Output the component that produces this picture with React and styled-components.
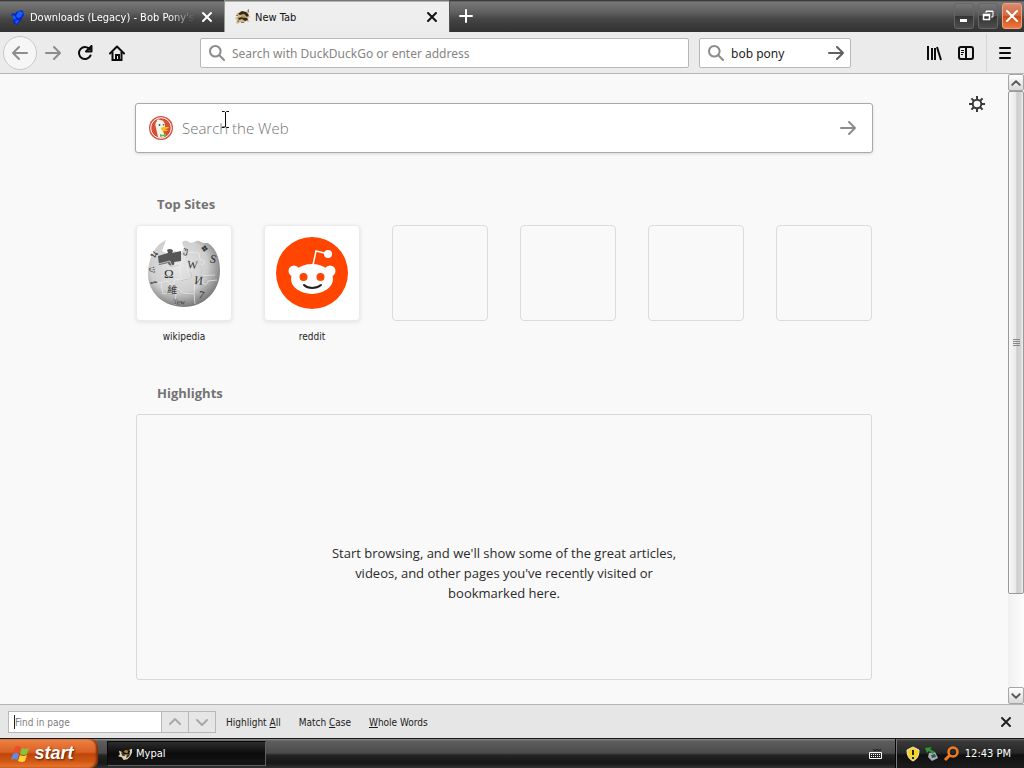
import { useState } from 'react'
import styled, { createGlobalStyle } from 'styled-components'

const tahoma = `'DejaVu Sans Condensed', Tahoma, 'Noto Sans', sans-serif`
const noto = `'Noto Sans', sans-serif`
const segoe = `'Segoe UI', 'Open Sans', 'Noto Sans', sans-serif`

const GlobalStyle = createGlobalStyle`
  * {
    box-sizing: border-box;
  }

  body {
    margin: 0;
    font-family: ${tahoma};
    font-size: 11px;
    color: #222;
  }

  button {
    display: flex;
    align-items: center;
    justify-content: center;
    margin: 0;
    padding: 0;
    border: 0;
    background: none;
    color: inherit;
    font: inherit;
    flex: none;
  }

  svg {
    display: block;
    flex: none;
  }
`

const Desktop = styled.div`
  height: 100vh;
  display: flex;
  flex-direction: column;
  background-color: #f9f9f9;
`

const TitleBar = styled.header`
  height: 32px;
  display: flex;
  flex: none;
  background: linear-gradient(#262626 0, #777 2px, #606060 12px, #434343 20px, #323232 100%);
`

const Tab = styled.div`
  width: 225px;
  display: flex;
  align-items: center;
  gap: 4px;
  padding: 2px 9px 0 10px;
  color: ${p => (p.$active ? '#111' : '#fff')};
  background: ${p => (p.$active ? 'linear-gradient(#777 0, #777 1px, #efefef 2px, #ececec)' : 'none')};
  border-right: 1px solid ${p => (p.$active ? '#555' : '#999')};
`

const TabTitle = styled.span`
  flex: 1;
  min-width: 0;
  overflow: hidden;
  white-space: nowrap;
  mask-image: ${p => (p.$fade ? 'linear-gradient(to right, #000 84%, transparent)' : 'none')};
`

const NewTabButton = styled.button`
  width: 32px;
  color: #fff;
`

const WindowButtons = styled.div`
  display: flex;
  gap: 4px;
  margin-left: auto;
  padding: 3px 2px 3px 0;
`

const WindowButton = styled.button`
  width: 20px;
  height: 26px;
  border: 1px solid ${p => (p.$close ? '#f3a080' : '#666')};
  border-radius: 3px;
  color: #fff;
  background: ${p =>
    p.$close
      ? 'linear-gradient(#d98a6c, #d2673d 50%, #cc4c19 52%, #ec7a43)'
      : 'linear-gradient(#777, #555 48%, #353535 52%, #4c4c4c)'};
`

const Toolbar = styled.nav`
  height: 42px;
  display: flex;
  flex: none;
  align-items: center;
  padding: 0 1px 0 3px;
  background-color: #ebebeb;
  border-bottom: 1px solid #b5b5b5;
`

const ToolButton = styled.button`
  width: 32px;
  height: 32px;
  color: ${p => (p.$dim ? '#8d8d8d' : '#0c0c0c')};
`

const BackButton = styled(ToolButton)`
  width: 34px;
  height: 34px;
  border: 1px solid #c8c8c8;
  border-radius: 50%;
  background-color: #f6f6f6;
`

const AddressField = styled.label`
  height: 30px;
  min-width: 0;
  display: flex;
  align-items: center;
  flex: ${p => (p.$grow ? '1' : '0 0 152px')};
  gap: 7px;
  padding: 0 6px 0 8px;
  margin-left: ${p => (p.$grow ? '67px' : '10px')};
  color: #8c8c8c;
  background-color: #fff;
  border: 1px solid #b8b8b8;
  border-radius: 2px;
`

const AddressInput = styled.input`
  flex: 1;
  min-width: 0;
  height: 20px;
  padding: 1px 0 0;
  border: 0;
  outline: 0;
  background: none;
  color: #222;
  font: 12px ${noto};

  &::placeholder {
    color: #858585;
    opacity: 1;
  }
`

const GoButton = styled.button`
  color: #5f5f5f;
`

const ToolbarEnd = styled.div`
  height: 100%;
  display: flex;
  align-items: center;
  margin-left: 67px;
`

const MenuButton = styled(ToolButton)`
  height: 38px;
  width: 37px;
  margin-left: 4px;
  border-left: 1px solid #d6d6d6;
`

const Viewport = styled.div`
  flex: 1;
  min-height: 0;
  display: flex;
`

const Page = styled.main`
  position: relative;
  flex: 1;
  min-width: 0;
  overflow: hidden;
  padding: 29px 24px 24px;
  font-family: ${segoe};
`

const SettingsButton = styled.button`
  position: absolute;
  top: 22px;
  right: 23px;
  color: #3a3a3a;
`

const Column = styled.div`
  max-width: 736px;
  margin: 0 auto;
`

const SearchBox = styled.form`
  position: relative;
  height: 50px;
  display: flex;
  align-items: center;
  gap: 9px;
  margin: 0 -1px;
  padding: 0 8px 0 13px;
  background-color: #fff;
  border: 1px solid #aaa;
  border-radius: 3px;
  box-shadow: 0 1px 3px #00000022;
`

const SearchInput = styled.input`
  flex: 1;
  min-width: 0;
  padding: 0;
  border: 0;
  outline: 0;
  background: none;
  font: 300 15px ${segoe};

  &::placeholder {
    color: #737373;
    opacity: 1;
  }
`

const Pointer = styled.svg`
  position: absolute;
  top: 7px;
  left: 86px;
`

const SectionTitle = styled.h3`
  margin: ${p => p.$top}px 0 0 21px;
  font: bold 13px / 20px ${segoe};
  color: #737373;
`

const Tiles = styled.ul`
  display: grid;
  grid-template-columns: repeat(6, 96px);
  justify-content: space-between;
  margin: 11px 0 0;
  padding: 0;
  list-style: none;
`

const Tile = styled.a`
  display: block;
  color: #222;
  font: 10px / 16px ${tahoma};
  text-align: center;
  text-decoration: none;
`

const TileCard = styled.span`
  height: 96px;
  display: flex;
  align-items: center;
  justify-content: center;
  margin-bottom: 8px;
  border-radius: 4px;
  background-color: ${p => (p.$empty ? 'transparent' : '#fff')};
  border: 1px solid ${p => (p.$empty ? '#dcdcdc' : '#ececec')};
  box-shadow: ${p => (p.$empty ? 'none' : '0 1px 4px #0000001c')};
`

const EmptyHighlights = styled.div`
  margin-top: 11px;
  padding: 128px 24px 76px;
  border: 1px solid #d9d9d9;
  border-radius: 3px;
`

const EmptyText = styled.p`
  max-width: 346px;
  margin: 0 auto;
  font: 13px / 20px ${segoe};
  color: #2a2a2a;
  text-align: center;
`

const ScrollBar = styled.div`
  width: 16px;
  display: flex;
  flex-direction: column;
  flex: none;
  background: linear-gradient(to right, #f0f0f0, #fdfdfd);
`

const ScrollArrow = styled.button`
  height: 17px;
  border: 1px solid #a5a5a5;
  border-radius: 2px;
  background: linear-gradient(#fff, #d8d8d8);
  color: #555;
`

const ScrollTrack = styled.div`
  flex: 1;
`

const ScrollThumb = styled.div`
  height: 84.4%;
  display: flex;
  align-items: center;
  justify-content: center;
  border: 1px solid #999;
  border-radius: 2px;
  background: linear-gradient(to right, #f8f8f8 0, #e8e8e8 50%, #cdcdcd 55%, #d6d6d6 85%, #f3f3f3);
  color: #888;
`

const FindBar = styled.section`
  height: 34px;
  display: flex;
  flex: none;
  align-items: center;
  padding: 1px 7px 0 8px;
  background-color: #e6e6e6;
  border-top: 1px solid #b5b5b5;
  font-size: 10px;
`

const FindInput = styled.input`
  width: 154px;
  height: 22px;
  padding: 0 6px;
  border: 1px solid #b8b8b8;
  border-radius: 0;
  outline: 0;
  background: linear-gradient(#222, #222) 5px center / 1px 14px no-repeat #fff;
  caret-color: transparent;
  font: 10px ${tahoma};

  &:not(:placeholder-shown) {
    background: #fff;
    caret-color: auto;
  }

  &::placeholder {
    color: #808080;
    opacity: 1;
  }
`

const FindStep = styled.button`
  width: 27px;
  height: 22px;
  border: solid #b8b8b8;
  border-width: 1px 1px 1px 0;
  color: #a8a8a8;
`

const FindOptions = styled.div`
  display: flex;
  gap: 18px;
  margin-left: 10px;
  color: #1c1c1c;
`

const FindClose = styled.button`
  margin-left: auto;
  padding: 3px;
`

const Taskbar = styled.footer`
  height: 30px;
  display: flex;
  flex: none;
  border-top: 1px solid #181818;
  background: linear-gradient(#909090 0, #5e5e5e 2px, #4b4b4b 14px, #252525 16px, #161616 24px, #333);
  color: #fff;
`

const StartButton = styled.button`
  width: 98px;
  gap: 4px;
  padding-right: 13px;
  border-radius: 0 8px 8px 0;
  background: linear-gradient(#e8925d 0, #ec7b3b 3px, #d96226 13px, #bf4609 15px, #cf5714 22px, #ec7a31);
  box-shadow: inset -2px 0 2px #7e2f0a;
  color: #fff;
  font: italic bold 18px 'Liberation Sans', sans-serif;
  text-shadow: 1px 1px 2px #5c2105;
`

const TaskButton = styled.button`
  width: 159px;
  height: 25px;
  justify-content: flex-start;
  gap: 3px;
  margin: 2px 0 0 9px;
  padding: 0 10px;
  border: 1px solid #080808;
  border-right-color: #606060;
  border-bottom-color: #606060;
  background: linear-gradient(#2c2c2c, #0c0c0c 50%, #151515);
`

const InputMethod = styled.button`
  margin-left: auto;
  padding: 0 12px;
`

const Tray = styled.div`
  display: flex;
  align-items: center;
  gap: 3px;
  padding: 0 13px 0 9px;
  border-left: 1px solid #050505;
  box-shadow: inset 1px 0 #777;
  background: linear-gradient(#6b6b6b 0, #3a3a3a 2px, #262626 14px, #101010 16px, #1c1c1c);
`

const Clock = styled.time`
  margin-left: 3px;
  white-space: nowrap;
`

const Stroke = ({ size = 16, width = 2, d, box = 16 }) => (
  <svg
    width={size}
    height={size}
    viewBox={`0 0 ${box} ${box}`}
    fill="none"
    stroke="currentColor"
    strokeWidth={width}
    strokeLinecap="round"
    strokeLinejoin="round"
    aria-hidden="true"
  >
    <path d={d} />
  </svg>
)

const CLOSE = 'M4 4l8 8M12 4l-8 8'
const RIGHT = 'M1 8h14M9 2l6 6-6 6'
const LEFT = 'M15 8H1M7 2L1 8l6 6'
const MAGNIFIER = 'M6.3 1a5.3 5.3 0 1 0 0 10.6a5.3 5.3 0 1 0 0-10.6M10.3 10.3L15 15'

const Paw = () => (
  <svg width="16" height="16" viewBox="0 0 16 16" aria-hidden="true">
    <path d="M6 3l3-1 2-1 2 1 1 4-2 3-1 3-3 2-1 2-3-1-1-4 1-2-3-3 2-2 2 1z" fill="#0726c4" />
    <path d="M8 3l3-1 2 2-2 4-3 1-2-2zM2 6l3 1 1 3-2 1zM5 12l3-1 1 1-3 3z" fill="#1260ff" />
  </svg>
)

const PalLogo = () => (
  <svg width="16" height="16" viewBox="0 0 16 16" aria-hidden="true">
    <path d="M1 5l5-3 5 1 2-3 1 1-1 4 2 3-2 1 1 4-3-1-2 2-4-1-2 2-2-1 1-3-2-2 3-2z" fill="#cdb98e" />
    <path d="M3 5l4-3 4 1 3 3-2 2-3-3-4 1zM3 9l4-1 5 1 1 2-3 1-3-2-3 1z" fill="#33271a" />
    <path d="M7 6l3 1-1 2-3-1z" fill="#bb9146" />
    <path d="M1 6h2v1H1zM2 12l2-1v2H3zM6 13h3v1H6zM13 1l1-1v3l-1 1z" fill="#8a7860" />
  </svg>
)

const PalTaskIcon = () => (
  <svg width="15" height="15" viewBox="0 0 16 16" aria-hidden="true">
    <path d="M1 5l3 1 2 3h5l2-3-1-2 3-1v4l-2 4-3 3-4 1-2-3-4-1 2-2z" fill="#ddd0ae" />
    <path d="M3 7h2l3 3-3 1zM9 10l4-3-1 4-3 2z" fill="#49371f" />
    <path d="M6 6l2-2 3 1-1 3-3-1z" fill="#a77b38" />
  </svg>
)

const Duck = () => (
  <svg width="24" height="24" viewBox="0 0 24 24" aria-hidden="true">
    <circle cx="12" cy="12" r="12" fill="#d94f35" />
    <circle cx="12" cy="12" r="10.3" fill="none" stroke="#fff" strokeWidth="1" />
    <path d="M8 5c-1-1 1-2 3-1 4 0 5 3 5 7l-2 4 2 5c-3 2-5 2-7 1L7 12c-1-3-1-5 1-7z" fill="#f5f4e9" />
    <circle cx="10.5" cy="9" r=".9" fill="#32536a" />
    <circle cx="14.4" cy="8.7" r=".8" fill="#32536a" />
    <path d="M12 12c2-2 5-1 8-1-1 2-4 2-5 2l4 1c-2 2-7 2-7-2z" fill="#fbbd18" />
    <path d="M11 18l3 1 3-2v4l-3-1-3 1z" fill="#67b84b" />
  </svg>
)

const letters = [
  ['Ω', 20, 45, 13, 0],
  ['W', 43, 35, 11, 5],
  ['И', 50, 51, 12, 5],
  ['維', 23, 60, 10, 5],
  ['7', 54, 65, 11, 12],
  ['ש', 5, 34, 9, 82],
  ['វ', 6, 49, 9, 75],
  ['S', 65, 29, 12, 15],
  ['უ', 39, 20, 9, 10],
  ['❖', 56, 18, 9, 10],
  ['น', 10, 26, 10, -50],
  ['Tew', 29, 71, 7, 3]
]

const Wikipedia = () => (
  <svg width="80" height="80" viewBox="0 0 80 80" role="img" aria-label="Wikipedia">
    <defs>
      <radialGradient id="globe" cx="42%" cy="38%" r="62%">
        <stop offset="0" stopColor="#e8e8e8" />
        <stop offset=".65" stopColor="#cecece" />
        <stop offset="1" stopColor="#7d7d7d" />
      </radialGradient>
    </defs>
    <path
      d="M17 10l5-3-4 11 7 3 5-3 7 2 3-5-2-6c5-3 6 0 9 1 4 0 5-3 8-2l4 2 5 0C72 15 76 26 76 38c0 20-16 36-36 36S4 60 4 41C4 29 8 17 17 10z"
      fill="url(#globe)"
    />
    <path d="M14 23l10-3-1-3c2-2 6-1 6 1l-1 2 9-2v10l-7 1c2 4-5 5-6 1l-9 2z" fill="#565656" />
    <path
      d="M14 31l12-3 2 5 7-2 2 15-7 1c2 5-5 6-6 1l-10 2M35 31l5-3 1-9 14 1 1 7c5-2 6 5 1 5l1 11 13-1M37 47l5-2c5 3 6-4 2-5l-1-8M17 49l2 12 12-1c-1-5 7-5 6 0l13 1 1-13 7-1c-1 5 6 6 6 1l9-1M32 61l-1 11M50 61l1 10"
      fill="none"
      stroke="#ededed"
      strokeWidth=".7"
    />
    <path
      d="M14 32l11-3 2 5 8-2M37 48l5-2c6 2 7-6 3-7M19 62l12-1c0-5 6-4 6 0l13 1M57 32l1 12 12-1"
      fill="none"
      stroke="#a4a4a4"
      strokeWidth=".4"
    />
    {letters.map(([glyph, x, y, size, turn]) => (
      <text
        key={glyph}
        x={x}
        y={y}
        transform={`rotate(${turn} ${x} ${y})`}
        fill="#333"
        fontSize={size}
        fontFamily="Liberation Serif, DejaVu Sans, Noto Sans CJK TC, serif"
      >
        {glyph}
      </text>
    ))}
  </svg>
)

const Reddit = () => (
  <svg width="72" height="72" viewBox="0 0 72 72" role="img" aria-label="Reddit">
    <circle cx="36" cy="36" r="36" fill="#ff4500" />
    <path d="M37 28l3-14 12 3" fill="none" stroke="#fff" strokeWidth="1.5" />
    <circle cx="52" cy="17" r="4" fill="#fff" />
    <circle cx="18" cy="34" r="5.5" fill="#fff" />
    <circle cx="54" cy="34" r="5.5" fill="#fff" />
    <ellipse cx="36" cy="42" rx="21" ry="15" fill="#fff" />
    <circle cx="27.5" cy="40" r="4" fill="#ff4500" />
    <circle cx="44.5" cy="40" r="4" fill="#ff4500" />
    <path d="M28 48c4 4 12 4 17 0" fill="none" stroke="#222" strokeWidth="2" strokeLinecap="round" />
  </svg>
)

const Gear = () => (
  <svg width="16" height="16" viewBox="0 0 16 16" fill="none" stroke="currentColor" strokeWidth="2" aria-hidden="true">
    <circle cx="8" cy="8" r="4.3" />
    <path d="M8 0v4M8 12v4M0 8h4M12 8h4M2.4 2.4l2.4 2.4M11.2 11.2l2.4 2.4M2.4 13.6l2.4-2.4M11.2 4.8l2.4-2.4" />
  </svg>
)

const Flag = () => (
  <svg width="19" height="19" viewBox="0 0 19 19" aria-hidden="true">
    <path d="M4 3q3-2 6 0L8 9Q5 7 2 9z" fill="#ed4e24" />
    <path d="M11 4q3 2 7 0l-2 6q-3 2-7 0z" fill="#80c73a" />
    <path d="M2 10q3-2 6 0l-2 6q-3-2-6 0z" fill="#5a8ee8" />
    <path d="M9 11q3 2 7 0l-2 6q-3 2-7 0z" fill="#ffd23e" />
  </svg>
)

const sites = [
  { title: 'wikipedia', href: '#wikipedia', Logo: Wikipedia },
  { title: 'reddit', href: '#reddit', Logo: Reddit }
]

const TopSites = () => (
  <Tiles>
    {sites.map(({ title, href, Logo }) => (
      <li key={title}>
        <Tile href={href}>
          <TileCard>
            <Logo />
          </TileCard>
          {title}
        </Tile>
      </li>
    ))}
    {[1, 2, 3, 4].map(slot => (
      <li key={slot}>
        <TileCard $empty />
      </li>
    ))}
  </Tiles>
)

const App = () => {
  const [query, setQuery] = useState('bob pony')

  return (
    <Desktop>
      <GlobalStyle />
      <TitleBar>
        <Tab>
          <Paw />
          <TabTitle $fade>Downloads (Legacy) - Bob Pony's</TabTitle>
          <button aria-label="Close tab">
            <Stroke d={CLOSE} />
          </button>
        </Tab>
        <Tab $active>
          <PalLogo />
          <TabTitle>New Tab</TabTitle>
          <button aria-label="Close tab">
            <Stroke d={CLOSE} />
          </button>
        </Tab>
        <NewTabButton aria-label="New tab">
          <Stroke d="M8 2v12M2 8h12" />
        </NewTabButton>
        <WindowButtons>
          <WindowButton aria-label="Minimize">
            <svg width="14" height="16">
              <path d="M3 11h7v3H3z" fill="#fff" />
            </svg>
          </WindowButton>
          <WindowButton aria-label="Restore">
            <svg width="12" height="12" fill="none" stroke="#fff">
              <path d="M4 3V1h7v6H9M4 1.5h7" strokeWidth="1" />
              <path d="M1.5 4.5h6v5h-6zM1 5.5h7" strokeWidth="1.5" />
            </svg>
          </WindowButton>
          <WindowButton $close aria-label="Close">
            <Stroke d="M3 3l10 10M13 3L3 13" />
          </WindowButton>
        </WindowButtons>
      </TitleBar>

      <Toolbar>
        <BackButton $dim aria-label="Back">
          <Stroke d={LEFT} />
        </BackButton>
        <ToolButton $dim aria-label="Forward">
          <Stroke d={RIGHT} />
        </ToolButton>
        <ToolButton aria-label="Reload">
          <Stroke d="M13.5 10.5A6 6 0 1 1 12.6 4.2M14.5 1v5.5H9z" />
        </ToolButton>
        <ToolButton aria-label="Home">
          <svg width="16" height="16" viewBox="0 0 16 16" fill="none" stroke="currentColor" strokeWidth="2">
            <path d="M1 8.5l7-7 7 7" strokeLinecap="round" strokeLinejoin="round" />
            <path d="M3.5 7v8h9V7M7 15v-5h3v5" />
          </svg>
        </ToolButton>
        <AddressField $grow>
          <Stroke d={MAGNIFIER} />
          <AddressInput type="text" aria-label="Address" placeholder="Search with DuckDuckGo or enter address" />
        </AddressField>
        <AddressField>
          <Stroke d={MAGNIFIER} />
          <AddressInput
            type="text"
            aria-label="Search"
            value={query}
            onChange={e => setQuery(e.currentTarget.value)}
          />
          <GoButton aria-label="Go">
            <Stroke d={RIGHT} />
          </GoButton>
        </AddressField>
        <ToolbarEnd>
          <ToolButton aria-label="Library">
            <svg width="16" height="16" fill="none" stroke="currentColor" strokeWidth="2">
              <path d="M2 1v14M6 3v12M9 3v12M11 2l4 13" />
            </svg>
          </ToolButton>
          <ToolButton aria-label="Sidebars">
            <svg width="16" height="16" fill="none" stroke="currentColor" strokeWidth="2">
              <rect x="1" y="2" width="14" height="12" rx="2" />
              <path d="M8 2v12" />
              <path d="M3 5.5h3M3 7.5h3M3 9.5h2" strokeWidth="1" />
            </svg>
          </ToolButton>
          <MenuButton aria-label="Menu">
            <Stroke d="M3 3h10M3 8h10M3 13h10" />
          </MenuButton>
        </ToolbarEnd>
      </Toolbar>

      <Viewport>
        <Page>
          <SettingsButton aria-label="Page settings">
            <Gear />
          </SettingsButton>
          <Column>
            <SearchBox onSubmit={e => e.preventDefault()}>
              <Duck />
              <SearchInput type="text" aria-label="Search the Web" placeholder="Search the Web" />
              <ToolButton $dim aria-label="Submit search">
                <Stroke d={RIGHT} />
              </ToolButton>
              <Pointer width="7" height="17" fill="none" stroke="#111" aria-hidden="true">
                <path d="M0 .5h2.5l1 1 1-1H7M3.5 1v15M0 16.5h2.5l1-1 1 1H7" />
              </Pointer>
            </SearchBox>
            <SectionTitle $top={41}>Top Sites</SectionTitle>
            <TopSites />
            <SectionTitle $top={38}>Highlights</SectionTitle>
            <EmptyHighlights>
              <EmptyText>
                Start browsing, and we'll show some of the great articles, videos, and other pages you've recently visited
                or bookmarked here.
              </EmptyText>
            </EmptyHighlights>
          </Column>
        </Page>
        <ScrollBar>
          <ScrollArrow aria-label="Scroll up">
            <Stroke size={10} d="M2 11l6-6 6 6" width={3} />
          </ScrollArrow>
          <ScrollTrack>
            <ScrollThumb>
              <svg width="7" height="8" stroke="currentColor">
                <path d="M0 .5h7M0 2.5h7M0 4.5h7M0 6.5h7" />
              </svg>
            </ScrollThumb>
          </ScrollTrack>
          <ScrollArrow aria-label="Scroll down">
            <Stroke size={10} d="M2 5l6 6 6-6" width={3} />
          </ScrollArrow>
        </ScrollBar>
      </Viewport>

      <FindBar>
        <FindInput type="text" aria-label="Find in page" placeholder="Find in page" autoFocus />
        <FindStep aria-label="Previous">
          <Stroke d="M3 10l5-5 5 5" />
        </FindStep>
        <FindStep aria-label="Next">
          <Stroke d="M3 6l5 5 5-5" />
        </FindStep>
        <FindOptions>
          <button>
            <span>
              Highlight <u>A</u>ll
            </span>
          </button>
          <button>
            <span>
              Match <u>C</u>ase
            </span>
          </button>
          <button>
            <span>
              <u>W</u>hole Words
            </span>
          </button>
        </FindOptions>
        <FindClose aria-label="Close find bar">
          <Stroke d={CLOSE} />
        </FindClose>
      </FindBar>

      <Taskbar>
        <StartButton>
          <Flag />
          start
        </StartButton>
        <TaskButton>
          <PalTaskIcon />
          Mypal
        </TaskButton>
        <InputMethod aria-label="Keyboard">
          <svg width="14" height="12" fill="none" stroke="#fff" aria-hidden="true">
            <path d="M4 1.5l2 1 2-1 2 1 2-1" stroke="#111" />
            <path d="M.5 4.5h12v6H.5z" />
            <path d="M2 6.5h10M2 8.5h10" strokeDasharray="1 1" />
          </svg>
        </InputMethod>
        <Tray>
          <svg width="16" height="16" viewBox="0 0 16 16" aria-hidden="true">
            <path d="M8 1l6 3c0 6-2 9-6 11C4 13 2 10 2 4z" fill="#f6d324" stroke="#e9e9d2" />
            <path d="M8 4v5M8 11v2" stroke="#222" strokeWidth="2" />
          </svg>
          <svg width="16" height="16" viewBox="0 0 16 16" aria-hidden="true">
            <path d="M5 7l6-1 3 6-6 3-4-4z" fill="#a6b1b4" />
            <path d="M7 9l4-1 1 3-4 1z" fill="#395462" />
            <path d="M3 7L1 2l7-1-2 2 5 3-2 2-4-3z" fill="#31943a" />
          </svg>
          <svg width="16" height="16" viewBox="0 0 16 16" fill="none" stroke="#f47b20" aria-hidden="true">
            <circle cx="10" cy="6" r="4.5" strokeWidth="2.5" />
            <path d="M7 9l-5 5" strokeWidth="3" />
          </svg>
          <Clock>12:43 PM</Clock>
        </Tray>
      </Taskbar>
    </Desktop>
  )
}

export default App
